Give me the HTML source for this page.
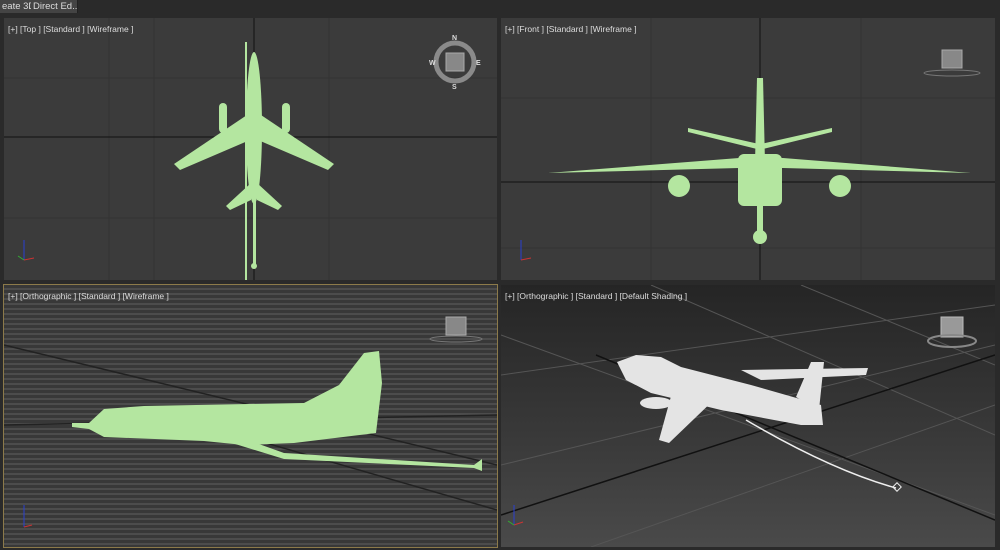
<!DOCTYPE html>
<html><head><meta charset="utf-8"><style>
html,body{margin:0;padding:0;background:#2a2a2a;width:1000px;height:550px;overflow:hidden;font-family:"Liberation Sans",sans-serif}
.tab{position:absolute;top:0;height:13px;background:#444;color:#ddd;font-size:9.5px;line-height:13px;padding:0 2px;white-space:nowrap;overflow:hidden;border-right:1px solid #222}
.vp{position:absolute;overflow:hidden}
.lbl{position:absolute;left:4px;top:6px;color:#ddd;font-size:8.5px;white-space:nowrap}
svg{position:absolute;left:0;top:0}
</style></head><body>
<div class="tab" style="left:0;width:27px">eate 3D</div>
<div class="tab" style="left:31px;width:42px">Direct Ed...</div>

<div class="vp" style="left:4px;top:18px;width:493px;height:262px;background:#3b3b3b">
<svg width="493" height="262">
<g stroke="#333" stroke-width="1">
<line x1="105" y1="0" x2="105" y2="262"/><line x1="325" y1="0" x2="325" y2="262"/><line x1="150" y1="0" x2="150" y2="262"/><line x1="0" y1="60" x2="493" y2="60"/><line x1="0" y1="200" x2="493" y2="200"/></g>
<line x1="0" y1="119" x2="493" y2="119" stroke="#111"/><line x1="250" y1="0" x2="250" y2="262" stroke="#111"/>
<g fill="#b4e6a0">
<rect x="241" y="24" width="2" height="244"/>
<ellipse cx="250" cy="110" rx="8" ry="76"/>
<polygon points="246,95 170,146 176,152 246,122"/><polygon points="254,95 330,146 324,152 254,122"/>
<rect x="215" y="85" width="8" height="30" rx="4"/><rect x="278" y="85" width="8" height="30" rx="4"/>
<polygon points="247,165 222,188 226,192 247,182"/><polygon points="253,165 278,188 274,192 253,182"/>
<rect x="249" y="180" width="3" height="70"/><ellipse cx="250" cy="248" rx="3" ry="3"/>
</g>
<circle cx="451" cy="44" r="19" fill="none" stroke="#8a8a8a" stroke-width="5"/>
<rect x="442" y="35" width="18" height="18" fill="#888" stroke="#aaa"/>
<g fill="#ddd" font-size="7" font-weight="bold"><text x="448" y="22">N</text><text x="448" y="71">S</text><text x="425" y="47">W</text><text x="472" y="47">E</text></g>
<line x1="20" y1="222" x2="20" y2="242" stroke="#2a3fd0"/><line x1="20" y1="242" x2="30" y2="240" stroke="#c33"/><line x1="20" y1="242" x2="14" y2="238" stroke="#3a3"/>
</svg><div class="lbl">[+] [Top ] [Standard ] [Wireframe ]</div></div>

<div class="vp" style="left:501px;top:18px;width:494px;height:262px;background:#3b3b3b">
<svg width="494" height="262">
<g stroke="#333"><line x1="150" y1="0" x2="150" y2="262"/><line x1="360" y1="0" x2="360" y2="262"/><line x1="0" y1="80" x2="494" y2="80"/><line x1="0" y1="230" x2="494" y2="230"/></g>
<line x1="0" y1="164" x2="494" y2="164" stroke="#111"/><line x1="259" y1="0" x2="259" y2="262" stroke="#111"/>
<g fill="#b4e6a0">
<polygon points="256,60 262,60 264,145 254,145"/>
<polygon points="187,110 258,126 260,132 187,114"/><polygon points="331,110 260,126 258,132 331,114"/>
<polygon points="47,155 238,140 282,140 470,155 282,150 238,150"/>
<rect x="237" y="136" width="44" height="52" rx="6"/>
<circle cx="178" cy="168" r="11"/><circle cx="339" cy="168" r="11"/>
<rect x="256" y="186" width="6" height="30"/><circle cx="259" cy="219" r="7"/>
</g>
<rect x="441" y="32" width="20" height="18" fill="#888" stroke="#aaa"/><ellipse cx="451" cy="55" rx="28" ry="3" fill="none" stroke="#777"/>
<line x1="20" y1="222" x2="20" y2="242" stroke="#2a3fd0"/><line x1="20" y1="242" x2="30" y2="240" stroke="#c33"/>
</svg><div class="lbl">[+] [Front ] [Standard ] [Wireframe ]</div></div>

<div class="vp" style="left:3px;top:284px;width:493px;height:262px;border:1px solid #8c7a4a;background:repeating-linear-gradient(180deg,#383838 0,#383838 3px,#4c4c4c 3px,#4c4c4c 5px)">
<svg width="493" height="262">
<line x1="0" y1="60" x2="493" y2="180" stroke="#222" stroke-width="1.5"/>
<line x1="0" y1="140" x2="493" y2="130" stroke="#222" stroke-width="1.5"/>
<line x1="200" y1="140" x2="493" y2="225" stroke="#222" stroke-width="1.5"/>
<g fill="#b4e6a0">
<polygon points="68,138 85,138 100,124 140,121 300,118 335,100 360,68 375,66 378,98 372,148 290,158 240,160 200,156 100,152 85,144 68,142"/>
<polygon points="230,150 280,168 470,180 478,174 478,186 470,183 280,174 228,158"/>
</g>
<line x1="20" y1="220" x2="20" y2="242" stroke="#2a3fd0"/><line x1="20" y1="242" x2="28" y2="240" stroke="#c33"/>
<rect x="442" y="32" width="20" height="18" fill="#888" stroke="#aaa"/><ellipse cx="452" cy="54" rx="26" ry="3" fill="none" stroke="#777"/>
</svg><div class="lbl">[+] [Orthographic ] [Standard ] [Wireframe ]</div></div>

<div class="vp" style="left:501px;top:285px;width:494px;height:262px;background:linear-gradient(180deg,#252525 0%,#3a3a3a 60%,#4a4a4a 100%)">
<svg width="494" height="262">
<g stroke="#555" stroke-width="1"><line x1="0" y1="90" x2="494" y2="20"/><line x1="0" y1="180" x2="494" y2="60"/><line x1="90" y1="262" x2="494" y2="120"/><line x1="0" y1="50" x2="494" y2="230"/><line x1="150" y1="0" x2="494" y2="150"/><line x1="300" y1="0" x2="494" y2="80"/></g>
<line x1="0" y1="230" x2="494" y2="70" stroke="#111" stroke-width="1.5"/>
<line x1="95" y1="70" x2="494" y2="235" stroke="#111" stroke-width="1.5"/>
<g fill="#e4e4e4">
<polygon points="240,85 367,83 365,90 260,95"/>
<polygon points="116,77 135,70 160,72 180,82 250,100 320,120 322,140 300,140 220,125 150,108 125,95"/>
<polygon points="175,93 158,155 168,158 218,110"/>
<polygon points="295,112 310,77 323,77 318,125"/>
<ellipse cx="155" cy="118" rx="16" ry="6"/>
</g>
<path d="M245,135 Q330,185 395,203" fill="none" stroke="#eee" stroke-width="1.5"/>
<rect x="393" y="199" width="6" height="6" transform="rotate(45 396 202)" fill="none" stroke="#eee"/>
<rect x="440" y="32" width="22" height="20" fill="#999" stroke="#bbb"/><ellipse cx="451" cy="56" rx="24" ry="6" fill="none" stroke="#888" stroke-width="2"/>
<line x1="13" y1="220" x2="13" y2="240" stroke="#2a3fd0"/><line x1="13" y1="240" x2="22" y2="237" stroke="#c33"/><line x1="13" y1="240" x2="7" y2="236" stroke="#3a3"/>
</svg><div class="lbl">[+] [Orthographic ] [Standard ] [Default Shading ]</div></div>
</body></html>
